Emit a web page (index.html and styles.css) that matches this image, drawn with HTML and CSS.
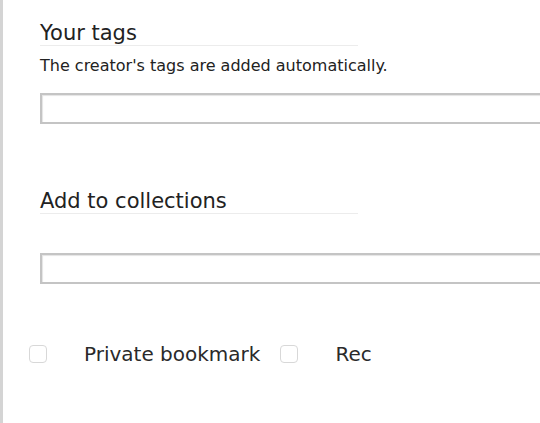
FILE: index.html
```html
<!DOCTYPE html>
<html>
<head>
<meta charset="utf-8">
<link rel="stylesheet" href="styles.css">
</head>
<body>
<div class="panel">
  <section class="field">
    <h2 class="field-title">Your tags</h2>
    <p class="field-note">The creator's tags are added automatically.</p>
    <div class="text-input"></div>
  </section>
  <section class="field field-collections">
    <h2 class="field-title">Add to collections</h2>
    <div class="text-input"></div>
  </section>
  <div class="options">
    <label class="option"><span class="checkbox"></span><span class="option-label">Private bookmark</span></label>
    <label class="option"><span class="checkbox"></span><span class="option-label">Rec</span></label>
  </div>
</div>
</body>
</html>
```
FILE: styles.css
```css
html, body {
  margin: 0;
  padding: 0;
  background: #fff;
  overflow: hidden;
}
.panel {
  height: 423px;
  border-left: 3px solid #d4d4d4;
  box-sizing: border-box;
  padding: 22px 0 0 37px;
  font-family: "DejaVu Sans", Verdana, sans-serif;
  color: #2a2a2a;
}
.field-title {
  margin: 0;
  width: 318px;
  font-size: 21px;
  font-weight: normal;
  line-height: 23px;
  border-bottom: 1px solid #ececec;
  color: #222;
}
.field-note {
  margin: 11px 0 0;
  font-size: 16px;
  line-height: 18px;
  color: #222;
}
.text-input {
  margin-top: 18px;
  height: 27px;
  border: 2px solid #c4c4c4;
  border-right: none;
  box-shadow: inset 1px 1px 1px #e4e4e4;
}
.field-collections {
  margin-top: 66px;
}
.field-collections .text-input {
  margin-top: 39px;
}
.options {
  display: flex;
  align-items: center;
  margin: 58px 0 0 -11px;
}
.option {
  display: flex;
  align-items: center;
}
.checkbox {
  width: 18px;
  height: 18px;
  border: 1px solid #d8d8d8;
  border-radius: 4px;
  box-sizing: border-box;
}
.option-label {
  margin-left: 37px;
  margin-right: 20px;
  font-size: 20px;
  line-height: 24px;
  color: #2a2a2a;
}
```
